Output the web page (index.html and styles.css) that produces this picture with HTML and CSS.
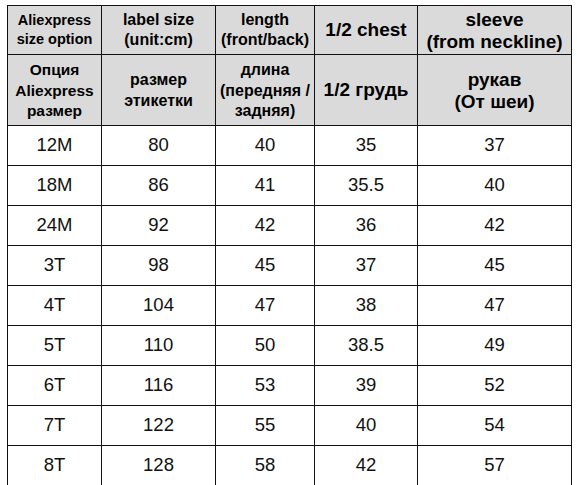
FILE: index.html
```html
<!DOCTYPE html>
<html lang="en">
<head>
<meta charset="utf-8">
<title>Size chart</title>
<link rel="stylesheet" href="styles.css">
</head>
<body>
<div class="chart">
  <div class="cell head h-opt">Aliexpress<br>size option</div>
  <div class="cell head h-label">label size<br>(unit:cm)</div>
  <div class="cell head h-label">length<br>(front/back)</div>
  <div class="cell head h-big">1/2 chest</div>
  <div class="cell head h-big h-sleeve">sleeve<br>(from neckline)</div>

  <div class="cell head ru-opt">Опция<br>Aliexpress<br>размер</div>
  <div class="cell head ru-label">размер<br>этикетки</div>
  <div class="cell head ru-len">длина<br>(передняя /<br>задняя)</div>
  <div class="cell head h-big">1/2 грудь</div>
  <div class="cell head h-big h-sleeve">рукав<br>(От шеи)</div>

  <div class="cell">12M</div><div class="cell">80</div><div class="cell">40</div><div class="cell">35</div><div class="cell">37</div>
  <div class="cell">18M</div><div class="cell">86</div><div class="cell">41</div><div class="cell">35.5</div><div class="cell">40</div>
  <div class="cell">24M</div><div class="cell">92</div><div class="cell">42</div><div class="cell">36</div><div class="cell">42</div>
  <div class="cell">3T</div><div class="cell">98</div><div class="cell">45</div><div class="cell">37</div><div class="cell">45</div>
  <div class="cell">4T</div><div class="cell">104</div><div class="cell">47</div><div class="cell">38</div><div class="cell">47</div>
  <div class="cell">5T</div><div class="cell">110</div><div class="cell">50</div><div class="cell">38.5</div><div class="cell">49</div>
  <div class="cell">6T</div><div class="cell">116</div><div class="cell">53</div><div class="cell">39</div><div class="cell">52</div>
  <div class="cell">7T</div><div class="cell">122</div><div class="cell">55</div><div class="cell">40</div><div class="cell">54</div>
  <div class="cell">8T</div><div class="cell">128</div><div class="cell">58</div><div class="cell">42</div><div class="cell">57</div>
</div>
</body>
</html>
```

FILE: styles.css
```css
html, body {
  margin: 0;
  padding: 0;
  background: #ffffff;
}

body {
  padding: 5px 0 0 7px;
  font-family: "Liberation Sans", Arial, sans-serif;
  color: #111;
}

.chart {
  display: grid;
  grid-template-columns: 93px 113px 98px 102px 153px;
  grid-template-rows: 48px 70px repeat(9, 39px);
  gap: 1px;
  width: max-content;
  background: #111;
  border: 1px solid #111;
}

.cell {
  display: flex;
  align-items: center;
  justify-content: center;
  text-align: center;
  background: #ffffff;
  font-size: 18.5px;
  line-height: 1;
}

.head {
  background: #dadada;
  font-weight: bold;
  color: #000;
}

.h-opt {
  font-size: 14.5px;
  line-height: 19px;
}

.h-label {
  font-size: 16px;
  line-height: 20px;
}

.h-big {
  font-size: 19px;
  line-height: 22px;
}

.h-sleeve {
  padding-top: 1px;
}

.ru-opt {
  font-size: 15.5px;
  line-height: 20.5px;
  padding-top: 2px;
}

.ru-label {
  font-size: 16px;
  line-height: 21px;
}

.ru-len {
  font-size: 16px;
  line-height: 20.5px;
  padding-top: 2px;
  white-space: nowrap;
}
```
